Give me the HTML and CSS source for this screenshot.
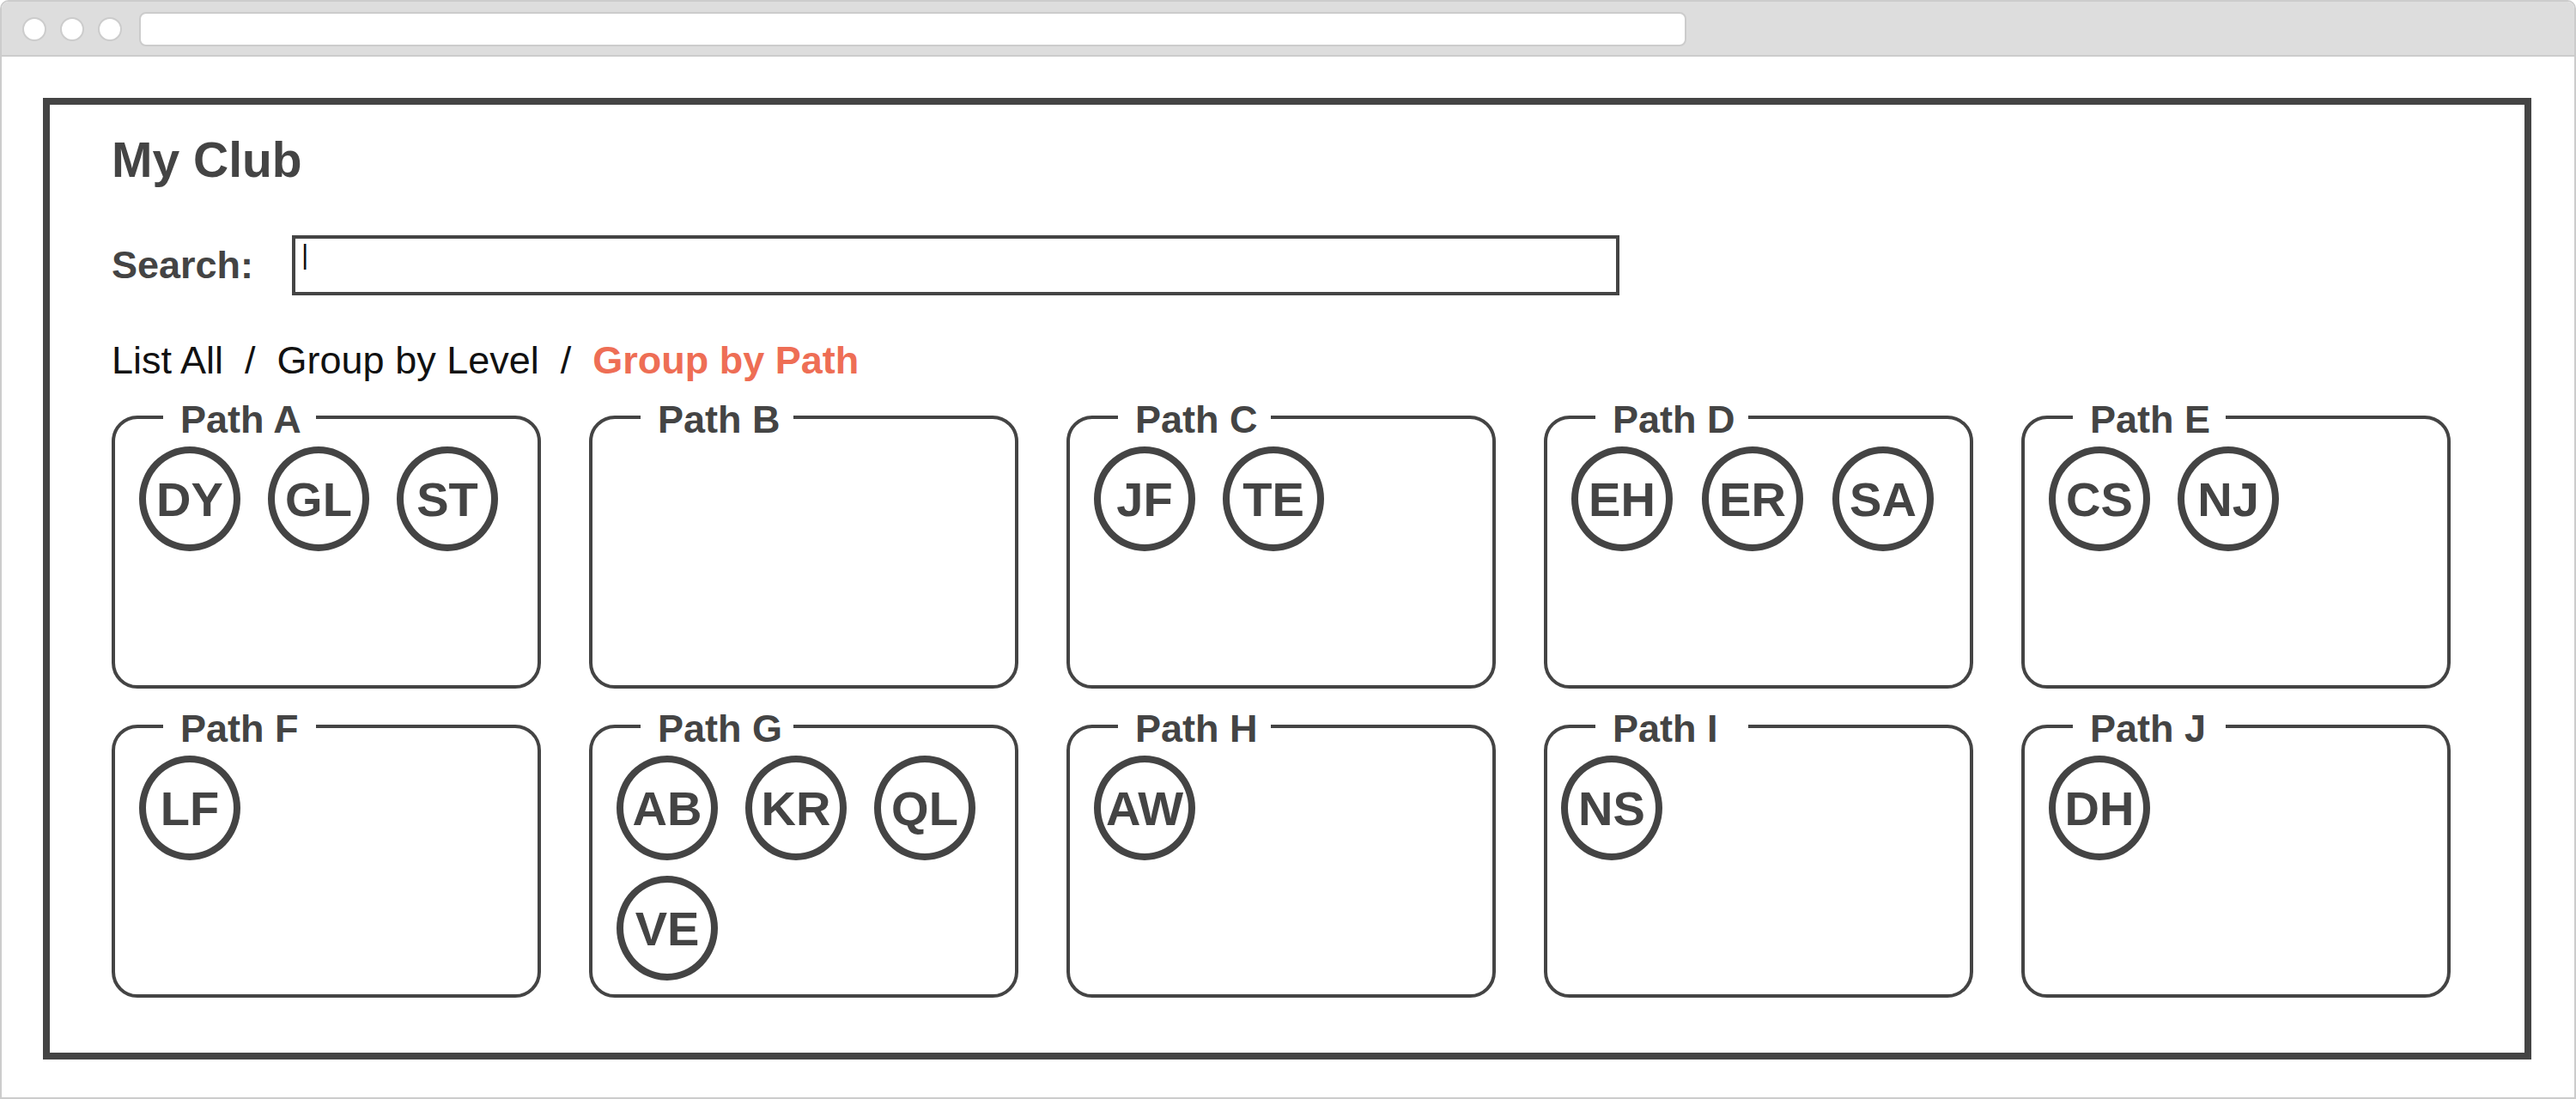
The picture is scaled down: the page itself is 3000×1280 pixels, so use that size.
FILE: index.html
```html
<!DOCTYPE html>
<html lang="en">
<head>
<meta charset="utf-8">
<title>My Club</title>
<link rel="stylesheet" href="styles.css">
</head>
<body>
<div class="browser">
  <header class="toolbar">
    <span class="dot"></span>
    <span class="dot"></span>
    <span class="dot"></span>
    <input class="address" type="text" aria-label="Address">
  </header>
  <main class="club">
    <h1 class="title">My Club</h1>
    <form class="search">
      <label class="search-label" for="search">Search:</label>
      <input class="search-input" id="search" type="text" value="|">
    </form>
    <nav class="views">
      <a class="view" href="#all">List All</a>
      <span>/</span>
      <a class="view" href="#level">Group by Level</a>
      <span>/</span>
      <a class="view view-active" href="#path">Group by Path</a>
    </nav>
    <div class="paths">
      <section class="path">
        <h2 class="path-name">Path A</h2>
        <ul class="members"><li class="member">DY</li><li class="member">GL</li><li class="member">ST</li></ul>
      </section>
      <section class="path">
        <h2 class="path-name">Path B</h2>
      </section>
      <section class="path">
        <h2 class="path-name">Path C</h2>
        <ul class="members"><li class="member">JF</li><li class="member">TE</li></ul>
      </section>
      <section class="path">
        <h2 class="path-name">Path D</h2>
        <ul class="members members-wide"><li class="member">EH</li><li class="member">ER</li><li class="member">SA</li></ul>
      </section>
      <section class="path">
        <h2 class="path-name">Path E</h2>
        <ul class="members"><li class="member">CS</li><li class="member">NJ</li></ul>
      </section>
      <section class="path">
        <h2 class="path-name">Path F</h2>
        <ul class="members"><li class="member">LF</li></ul>
      </section>
      <section class="path">
        <h2 class="path-name">Path G</h2>
        <ul class="members"><li class="member">AB</li><li class="member">KR</li><li class="member">QL</li><li class="member">VE</li></ul>
      </section>
      <section class="path">
        <h2 class="path-name">Path H</h2>
        <ul class="members"><li class="member">AW</li></ul>
      </section>
      <section class="path">
        <h2 class="path-name">Path I</h2>
        <ul class="members members-near"><li class="member">NS</li></ul>
      </section>
      <section class="path">
        <h2 class="path-name">Path J</h2>
        <ul class="members"><li class="member">DH</li></ul>
      </section>
    </div>
  </main>
</div>
</body>
</html>
```
FILE: styles.css
```css
* {
  box-sizing: border-box;
}

body {
  margin: 0;
  background: #fff;
  color: #444;
  font-family: "Liberation Sans", Arial, sans-serif;
}

.browser {
  display: flex;
  flex-direction: column;
  min-height: 100vh;
  border: 2px solid #ccc;
  border-radius: 10px 10px 0 0;
  overflow: hidden;
}

.toolbar {
  display: flex;
  align-items: center;
  gap: 16px;
  padding: 12px 24px 10px;
  background: #ddd;
  border-bottom: 2px solid #ccc;
}

.dot {
  width: 28px;
  height: 28px;
  border: 2px solid #ccc;
  border-radius: 50%;
  background: #fff;
}

.address {
  width: 61.13%;
  height: 40px;
  margin-left: 4px;
  border: 2px solid #ccc;
  border-radius: 8px;
  background: #fff;
}

.club {
  flex: 1;
  margin: 48px 50px 44px 48px;
  padding: 36px 86px 64px 72px;
  border: 8px solid #444;
}

.title {
  margin: 0;
  font-size: 57px;
  line-height: 56px;
}

.search {
  display: flex;
  align-items: center;
  margin: 60px 0 0;
}

.search-label {
  width: 210px;
  font-size: 45px;
  font-weight: bold;
}

.search-input {
  width: 56.75%;
  height: 70px;
  padding: 0 7px 26px;
  border: 4px solid #444;
  border-radius: 0;
  background: #fff;
  color: #111;
  font-family: inherit;
  font-size: 32px;
  outline: none;
}

.views {
  display: flex;
  gap: 25px;
  margin: 54px 0 0;
  color: #111;
  font-size: 45px;
  line-height: 44px;
}

.view {
  color: inherit;
  text-decoration: none;
}

.view-active {
  color: #ee6e55;
  font-weight: bold;
}

.paths {
  display: grid;
  grid-template-columns: repeat(5, 1fr);
  gap: 42px 56px;
  margin-top: 42px;
}

.path {
  min-height: 318px;
  border: 4px solid #444;
  border-radius: 30px;
}

/* The name sits on the card's top border and breaks it. */
.path-name {
  width: 178px;
  margin: -22px 0 0 56px;
  padding-left: 20px;
  background: #fff;
  font-size: 45px;
  line-height: 46px;
  white-space: nowrap;
}

.members {
  display: flex;
  flex-wrap: wrap;
  gap: 18px 32px;
  margin: 8px 0 0;
  padding: 0 0 0 28px;
  list-style: none;
}

.members-wide {
  column-gap: 34px;
}

.members-near {
  padding-left: 16px;
}

.member {
  display: flex;
  align-items: center;
  justify-content: center;
  width: 118px;
  height: 122px;
  padding-top: 2px;
  border: 8px solid #444;
  border-radius: 50%;
  font-size: 56px;
  font-weight: bold;
  line-height: 56px;
}
```
